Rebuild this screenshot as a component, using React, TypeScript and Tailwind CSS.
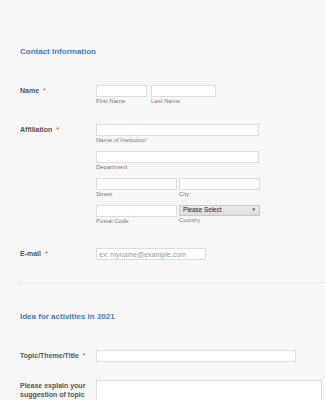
const Star = () => (
  <span className="ml-[2px] text-[7px] font-normal text-[#e0433b]">*</span>
);

const Field = ({ w, h = "h-[12px]" }: { w: string; h?: string }) => (
  <div className={`${w} ${h} border border-[#dcdcdc] bg-white`} />
);

const Sub = ({ children }: { children: React.ReactNode }) => (
  <div className="mt-[1px] text-[6px] leading-[7px] text-[#7a7a7a]">{children}</div>
);

const Label = ({ children, className = "" }: { children: React.ReactNode; className?: string }) => (
  <div className={`w-[96px] shrink-0 pl-[20px] pr-[6px] text-[7px] font-bold leading-[10px] text-[#555] ${className}`}>
    {children}
  </div>
);

export default function App() {
  return (
    <div
      className="w-[325px] h-[400px] overflow-hidden bg-[#f7f7f7]"
      style={{ fontFamily: '"Liberation Sans", Arial, sans-serif' }}
    >
      <h2 className="mt-[47px] pl-[20px] text-[8px] font-bold leading-[10px] text-[#3b7dc8]">
        Contact Information
      </h2>

      {/* Name */}
      <div className="mt-[28px] flex">
        <Label className="pt-[1px]">
          Name <Star />
        </Label>
        <div className="flex gap-[4px]">
          <div>
            <Field w="w-[51px]" />
            <Sub>First Name</Sub>
          </div>
          <div>
            <Field w="w-[65px]" />
            <Sub>Last Name</Sub>
          </div>
        </div>
      </div>

      {/* Affiliation */}
      <div className="mt-[19px] flex">
        <Label className="pt-[1px]">
          Affiliation <Star />
        </Label>
        <div className="flex flex-col gap-[7px]">
          <div>
            <Field w="w-[163px]" />
            <Sub>Name of Institution</Sub>
          </div>
          <div>
            <Field w="w-[163px]" />
            <Sub>Department</Sub>
          </div>
          <div className="flex gap-[2px]">
            <div>
              <Field w="w-[81px]" />
              <Sub>Street</Sub>
            </div>
            <div>
              <Field w="w-[81px]" />
              <Sub>City</Sub>
            </div>
          </div>
          <div className="flex gap-[2px]">
            <div>
              <Field w="w-[81px]" />
              <Sub>Postal Code</Sub>
            </div>
            <div>
              <div className="flex h-[11px] w-[81px] items-center justify-between border border-[#c8c8c8] bg-gradient-to-b from-[#ececec] to-[#dcdcdc] pl-[3px] pr-[3px]">
                <span className="text-[6.3px] leading-none text-[#222]">Please Select</span>
                <span className="text-[4.5px] leading-none text-[#444]">▼</span>
              </div>
              <div className="mt-[1px] text-[6px] leading-[7px] text-[#7a7a7a]">Country</div>
            </div>
          </div>
        </div>
      </div>

      {/* E-mail */}
      <div className="mt-[23px] flex">
        <Label className="pt-[1px]">
          E-mail <Star />
        </Label>
        <div className="flex h-[12px] w-[110px] items-center border border-[#dcdcdc] bg-white pl-[2px]">
          <span className="text-[7px] leading-none text-[#9a9a9a]">ex: myname@example.com</span>
        </div>
      </div>

      <div className="ml-[18px] mt-[22px] border-t border-dotted border-[#e2e2e2]" />

      <h2 className="mt-[29px] pl-[20px] text-[8px] font-bold leading-[10px] text-[#3b7dc8]">
        Idea for activities in 2021
      </h2>

      {/* Topic */}
      <div className="mt-[28px] flex">
        <Label className="pt-[1px]">
          Topic/Theme/Title <Star />
        </Label>
        <Field w="w-[200px]" />
      </div>

      {/* Explanation */}
      <div className="mt-[18px] flex">
        <div className="w-[96px] shrink-0 pl-[20px] pr-[6px] pt-[2px] text-[7px] font-bold leading-[8.5px] text-[#555]">
          Please explain your suggestion of topic (max 300 words) <Star />
        </div>
        <div className="h-[60px] w-[226px] border border-[#dcdcdc] bg-white" />
      </div>
    </div>
  );
}
